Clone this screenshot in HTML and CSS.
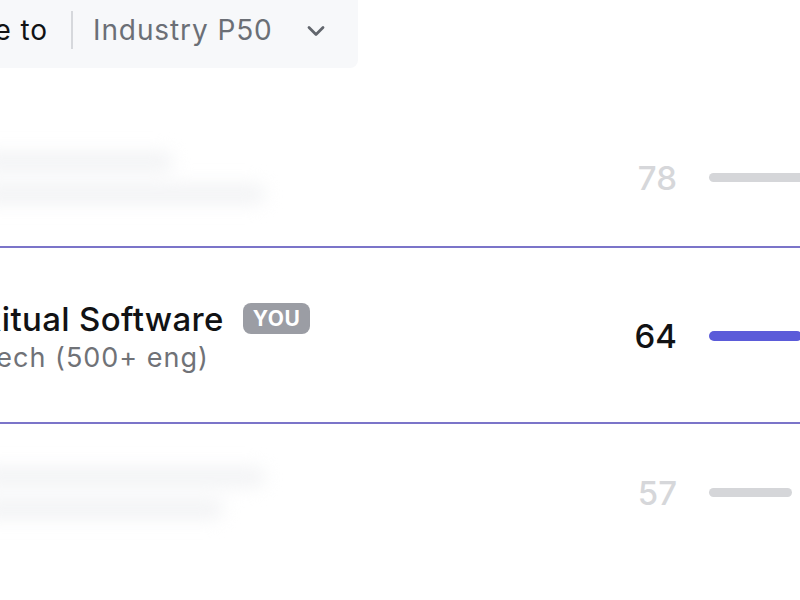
FILE: index.html
```html
<!DOCTYPE html>
<html lang="en">
<head>
    <meta charset="UTF-8">
    <meta name="viewport" content="width=device-width, initial-scale=1.0">
    <title>Benchmark</title>
    <link rel="stylesheet" href="styles.css">
</head>
<body>
    <div class="toolbar">
        <div class="compare-label"><span>Compare to</span></div>
        <div class="divider"></div>
        <div class="select">
            <span>Industry P50</span>
            <svg class="chevron" viewBox="0 0 24 24" width="28" height="28">
                <polyline points="6 9 12 15 18 9" fill="none" stroke="#62666d" stroke-width="2.4" stroke-linecap="round" stroke-linejoin="round"/>
            </svg>
        </div>
    </div>

    <div class="board">
        <!-- Hidden peer above -->
        <div class="row row-blurred row-top">
            <div class="ghost">
                <div class="ghost-line short"></div>
                <div class="ghost-line long"></div>
            </div>
            <div class="score">78</div>
            <div class="track"><div class="bar" style="width: 78%"></div></div>
        </div>

        <!-- Current company -->
        <div class="row row-current">
            <div class="company">
                <div class="company-name">
                    <span>Ritual Software</span>
                    <span class="badge">YOU</span>
                </div>
                <div class="company-meta">Tech (500+ eng)</div>
            </div>
            <div class="score">64</div>
            <div class="track"><div class="bar" style="width: 64%"></div></div>
        </div>

        <!-- Hidden peer below -->
        <div class="row row-blurred row-bottom">
            <div class="ghost">
                <div class="ghost-line long"></div>
                <div class="ghost-line mid"></div>
            </div>
            <div class="score">57</div>
            <div class="track"><div class="bar" style="width: 57%"></div></div>
        </div>
    </div>
</body>
</html>
```

FILE: styles.css
```css
body {
    margin: 0;
    font-family: 'Inter', 'Noto Sans', sans-serif;
    background: #ffffff;
    color: #111214;
    overflow: hidden;
    width: 800px;
    height: 600px;
}

.toolbar {
    display: flex;
    align-items: center;
    width: 358px;
    height: 68px;
    padding-bottom: 8px;
    box-sizing: border-box;
    background-color: #f7f8fa;
    border-bottom-right-radius: 8px;
    font-size: 28px;
    letter-spacing: 0.9px;
}

.compare-label {
    display: flex;
    justify-content: flex-end;
    width: 48px;
    flex-shrink: 0;
    white-space: nowrap;
    color: #111214;
}

.divider {
    width: 2px;
    height: 38px;
    margin: 0 20px 0 23px;
    background-color: #d6d8dc;
}

.select {
    display: flex;
    align-items: center;
    gap: 29px;
    color: #6b6f76;
}

.chevron {
    width: 28px;
    height: 28px;
    margin-top: 2px;
}

.board {
    width: 874px;
    margin-left: -20px;
    margin-top: 42px;
}

.row {
    display: grid;
    grid-template-columns: 1fr 60px 145px;
    column-gap: 32px;
    align-items: center;
}

.row-top {
    height: 136px;
}

.row-current {
    height: 178px;
    border-top: 2px solid #7b74c9;
    border-bottom: 2px solid #7b74c9;
    box-sizing: border-box;
    padding-top: 2px;
}

.row-bottom {
    height: 138px;
}

.score {
    font-size: 33px;
    font-weight: 500;
    text-align: right;
    color: #d6d7da;
}

.row-current .score {
    color: #111214;
}

.track {
    height: 10px;
}

.bar {
    height: 9px;
    border-radius: 5px;
    background-color: #d5d6d9;
}

.row-current .bar {
    height: 10px;
    background-color: #5b5bd9;
}

.ghost {
    display: flex;
    flex-direction: column;
    gap: 14px;
    filter: blur(9px);
}

.ghost-line {
    height: 18px;
    border-radius: 6px;
    background-color: #f1f2f4;
}

.ghost-line.short { width: 192px; }
.ghost-line.long { width: 284px; }
.ghost-line.mid { width: 242px; }

.company-name {
    display: flex;
    align-items: center;
    gap: 19px;
    font-size: 33px;
    font-weight: 500;
    letter-spacing: 0.35px;
}

.badge {
    display: inline-flex;
    align-items: center;
    height: 31px;
    padding: 0 10px;
    border-radius: 8px;
    background-color: #9b9da4;
    color: #ffffff;
    font-size: 21px;
    font-weight: 700;
    letter-spacing: 0.5px;
}

.company-meta {
    margin-top: 2px;
    font-size: 27px;
    letter-spacing: 1px;
    color: #707277;
}
```
